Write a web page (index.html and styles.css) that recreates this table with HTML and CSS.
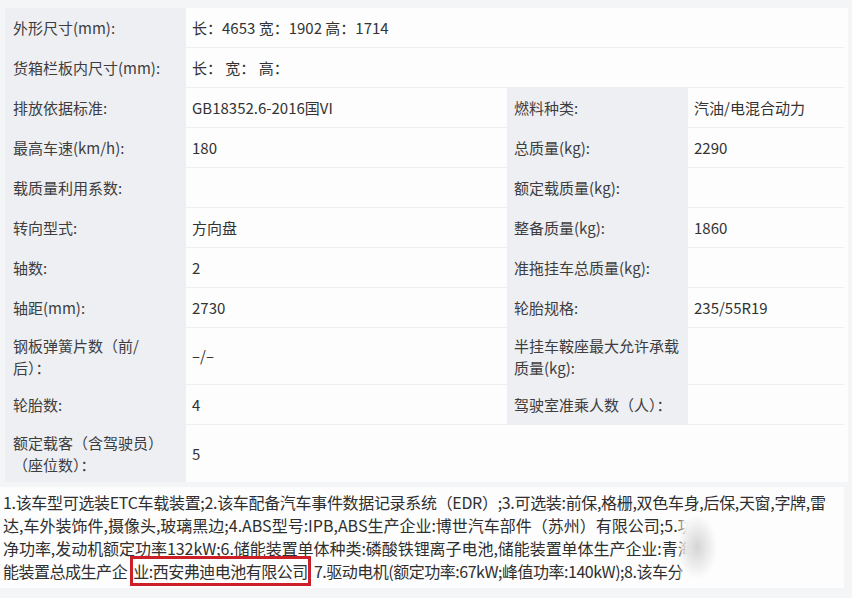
FILE: index.html
```html
<!DOCTYPE html>
<html lang="zh-CN">
<head>
<meta charset="utf-8">
<title>车辆参数</title>
<link rel="stylesheet" href="styles.css">
</head>
<body>
<div class="page">
  <div class="spec">
    <div class="lab">外形尺寸(mm):</div>
    <div class="val wide">长：4653 宽：1902 高：1714</div>

    <div class="lab">货箱栏板内尺寸(mm):</div>
    <div class="val wide">长： 宽： 高：</div>

    <div class="lab">排放依据标准:</div>
    <div class="val">GB18352.6-2016国VI</div>
    <div class="lab lab2">燃料种类:</div>
    <div class="val val2">汽油/电混合动力</div>

    <div class="lab">最高车速(km/h):</div>
    <div class="val">180</div>
    <div class="lab lab2">总质量(kg):</div>
    <div class="val val2">2290</div>

    <div class="lab">载质量利用系数:</div>
    <div class="val"></div>
    <div class="lab lab2">额定载质量(kg):</div>
    <div class="val val2"></div>

    <div class="lab">转向型式:</div>
    <div class="val">方向盘</div>
    <div class="lab lab2">整备质量(kg):</div>
    <div class="val val2">1860</div>

    <div class="lab">轴数:</div>
    <div class="val">2</div>
    <div class="lab lab2">准拖挂车总质量(kg):</div>
    <div class="val val2"></div>

    <div class="lab">轴距(mm):</div>
    <div class="val">2730</div>
    <div class="lab lab2">轮胎规格:</div>
    <div class="val val2">235/55R19</div>

    <div class="lab">钢板弹簧片数（前/后）：</div>
    <div class="val">–/–</div>
    <div class="lab lab2">半挂车鞍座最大允许承载质量(kg):</div>
    <div class="val val2"></div>

    <div class="lab">轮胎数:</div>
    <div class="val">4</div>
    <div class="lab lab2">驾驶室准乘人数（人）：</div>
    <div class="val val2"></div>

    <div class="lab">额定载客（含驾驶员）（座位数）：</div>
    <div class="val wide last">5</div>
  </div>

  <div class="notes">
    <div class="line l1">1.该车型可选装ETC车载装置;2.该车配备汽车事件数据记录系统（EDR）;3.可选装:前保,格栅,双色车身,后保,天窗,字牌,雷</div>
    <div class="line l2">达,车外装饰件,摄像头,玻璃黑边;4.ABS型号:IPB,ABS生产企业:博世汽车部件（苏州）有限公司;5.功率:发动机最大</div>
    <div class="line l3">净功率,发动机额定功率132kW;6.储能装置单体种类:磷酸铁锂离子电池,储能装置单体生产企业:青海弗迪电池有限公司,储</div>
    <div class="line l4">能装置总成生产企<span class="mark">业:西安弗迪电池有限公司</span>7.驱动电机(额定功率:67kW;峰值功率:140kW);8.该车分</div>
    <div class="veil"></div>
  </div>
</div>
</body>
</html>
```

FILE: styles.css
```css
* {
  box-sizing: border-box;
}

html, body {
  margin: 0;
  padding: 0;
}

body {
  width: 852px;
  height: 598px;
  overflow: hidden;
  background: #f4f5f7;
  font-family: "Noto Sans CJK SC", "Noto Sans", sans-serif;
  color: #363636;
}

.page {
  padding: 8px 4px 0 5px;
}

.spec {
  display: grid;
  grid-template-columns: 181px 321px 181px 156px;
  grid-template-rows: repeat(8, 40px) 57px 40px 57px;
  background: #fdfdfe;
}

.lab {
  background: #eeeff2;
  font-size: 15px;
  line-height: 22px;
  color: #3d3d40;
  padding: 0 21px 0 8px;
  display: flex;
  align-items: center;
}

.lab2 {
  padding: 0 6px 0 7px;
}

.val {
  background: #fdfdfe;
  font-size: 15px;
  line-height: 22px;
  color: #333;
  padding: 0 6px;
  display: flex;
  align-items: center;
  border-bottom: 1px solid #eceef2;
}

.wide {
  grid-column: span 3;
}

.last {
  border-bottom: none;
}

.notes {
  position: relative;
  margin: 5px 4px 0 -5px;
  padding: 4px 0 4px 3px;
  background: #fdfdfd;
  height: 101px;
  overflow: hidden;
}

.line {
  font-size: 16px;
  line-height: 23px;
  white-space: nowrap;
  color: #2f2f2f;
}

.l1 {
  letter-spacing: -0.32px;
}

.l2 {
  letter-spacing: 0;
}

.l3 {
  letter-spacing: -0.05px;
}

.l4 {
  letter-spacing: -0.48px;
}

.mark {
  outline: 3px solid #cc1f27;
  outline-offset: 0;
  margin: 0 6px 0 6px;
}

.veil {
  position: absolute;
  left: 679px;
  top: 26px;
  right: 0;
  bottom: 0;
  background:
    radial-gradient(ellipse 20px 32px at 18px 34px, rgba(120,120,125,0.3), rgba(120,120,125,0) 100%),
    linear-gradient(to right, rgba(253,253,253,0.2) 0, rgba(253,253,253,0.95) 7px, #fdfdfd 12px);
}
```
